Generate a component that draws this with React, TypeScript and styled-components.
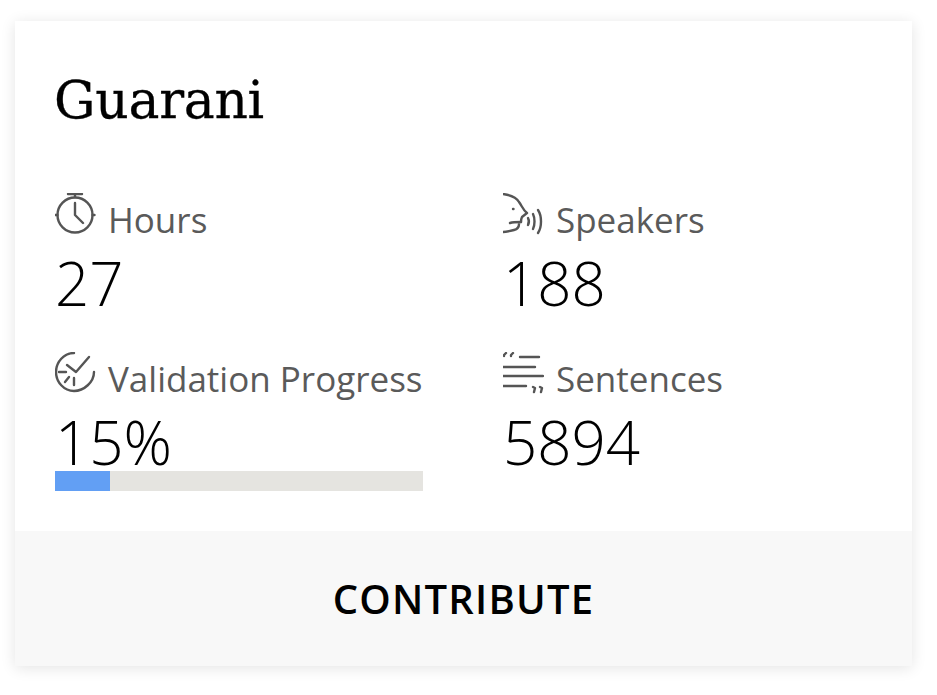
import React from "react";
import styled, { createGlobalStyle } from "styled-components";

const Global = createGlobalStyle`
  html, body { margin: 0; padding: 0; background: #fff; }
  body { width: 937px; height: 695px; overflow: hidden; font-family: "Open Sans", sans-serif; }
`;
const Page = styled.div`
  padding: 21px 25px 29px 15px;
  box-sizing: border-box;
  height: 695px;
`;
const Card = styled.section`
  width: 897px;
  height: 645px;
  display: flex;
  flex-direction: column;
  background: #fff;
  box-shadow: 0 2px 14px rgba(0, 0, 0, 0.11);
`;
const Body = styled.div`
  flex: 1;
  padding: 40px 40px 0;
`;
const Title = styled.h1`
  margin: 0 0 0 -1px;
  height: 130px;
  font: 400 52px/78px "DejaVu Serif", serif;
  letter-spacing: -0.3px;
  -webkit-text-stroke: 0.3px #000;
  color: #000;
`;
const Grid = styled.div`
  display: grid;
  grid-template-columns: 448px 1fr;
  grid-auto-rows: 159px;
`;
const Stat = styled.div`
  display: flex;
  flex-direction: column;
  align-items: flex-start;
`;
const Label = styled.div`
  display: flex;
  align-items: flex-start;
  gap: 12px;
  height: 52px;
  font-size: 35px;
  line-height: 46px;
  color: #5a5a5a;
`;
const LabelText = styled.span`
  margin-top: 6px;
`;
const Icon = styled.svg`
  flex: none;
  width: 41px;
  height: 42px;
  margin-top: 2px;
  fill: none;
  stroke: #555;
  stroke-width: 2.4;
  stroke-linecap: round;
  stroke-linejoin: round;
`;
const Value = styled.div`
  font-size: 60px;
  font-weight: 300;
  line-height: 82px;
  height: 70px;
  color: #000;
  margin-top: -1px;
`;
const Track = styled.div`
  width: 368px;
  height: 20px;
  background: #e5e4e0;
`;
const Fill = styled.div`
  height: 100%;
  background: #629ff4;
`;
const Footer = styled.button`
  flex: none;
  height: 135px;
  border: 0;
  padding: 0;
  background: #f8f8f8;
  color: #000;
  font: 600 40px/135px "Open Sans", sans-serif;
  letter-spacing: 1.2px;
  text-align: center;
`;

const ClockIcon = () => (
  <Icon viewBox="0 0 41 42">
    <circle cx="20" cy="22" r="17.5" />
    <path d="M13 1h14M20 1v3M20 10v12l8 8M0.5 22h2M37.5 22h2" />
  </Icon>
);
const SpeakIcon = () => (
  <Icon viewBox="0 0 41 42">
    <path d="M0 1c7 1 13 3 16 8 3 4 4 8 8 11l-5 4c-1 2-1 4-1 5" />
    <path d="M7 30c3-1 7-1 11-1M16 31c0 3-1 5-5 6-4 1-8 2-11 2M10 16h.5" />
    <path d="M25 25c1 2 1 5 0 7M30 21c2 4 2 11 0 15M35 17c4 6 4 17 0 23" />
  </Icon>
);
const ValidIcon = () => (
  <Icon viewBox="0 0 41 42">
    <path d="M19 1C9 1 1 10 1 20s8 19 18 19 20-9 20-19" />
    <path d="M12 13l9 7L34 5" />
    <path d="M4 20h7M10 30l4-5M19 33v-7" />
  </Icon>
);
const SentIcon = () => (
  <Icon viewBox="0 0 41 42">
    <path d="M17 5h19M0 15h32M0 24h40M0 34h23" />
    <path d="M3 1L1 3v1M10 1L8 3v1M30 35l2 1-1 4M37 35l2 1-1 4" />
  </Icon>
);

const stats = [
  { icon: <ClockIcon />, label: "Hours", value: "27" },
  { icon: <SpeakIcon />, label: "Speakers", value: "188" },
  { icon: <ValidIcon />, label: "Validation Progress", value: "15%", progress: 15 },
  { icon: <SentIcon />, label: "Sentences", value: "5894" },
];

export default function App() {
  return (
    <Page>
      <Global />
      <Card>
        <Body>
          <Title>Guarani</Title>
          <Grid>
            {stats.map((s) => (
              <Stat key={s.label}>
                <Label>
                  {s.icon}
                  <LabelText>{s.label}</LabelText>
                </Label>
                <Value>{s.value}</Value>
                {s.progress !== undefined && (
                  <Track>
                    <Fill style={{ width: `${s.progress}%` }} />
                  </Track>
                )}
              </Stat>
            ))}
          </Grid>
        </Body>
        <Footer>CONTRIBUTE</Footer>
      </Card>
    </Page>
  );
}
